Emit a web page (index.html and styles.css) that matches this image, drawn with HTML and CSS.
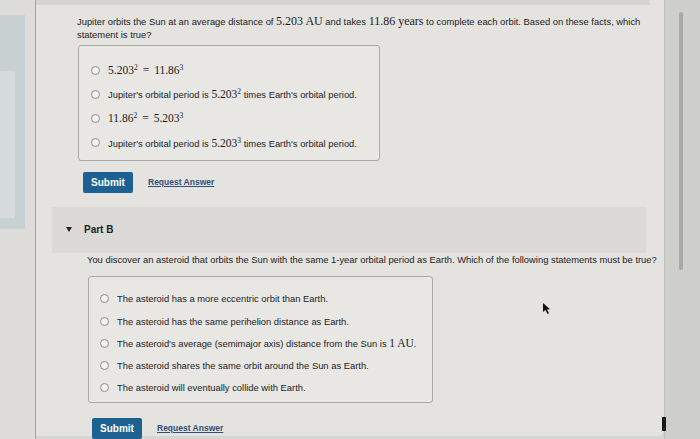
FILE: index.html
```html
<!DOCTYPE html>
<html>
<head>
<meta charset="utf-8">
<link rel="stylesheet" href="styles.css">
</head>
<body>
<div class="page">
  <div class="side">
    <div class="side-panel"><div class="side-inner"></div></div>
  </div>
  <div class="main">
    <div class="topstrip"></div>
    <section class="part part-a">
      <p class="question">Jupiter orbits the Sun at an average distance of <span class="m">5.203 AU</span> and takes <span class="m">11.86 years</span> to complete each orbit. Based on these facts, which statement is true?</p>
      <div class="choices choices-a">
        <label class="choice"><span class="radio"></span><span class="m">5.203<sup>2</sup><span class="op">=</span>11.86<sup>3</sup></span></label>
        <label class="choice"><span class="radio"></span><span>Jupiter's orbital period is <span class="m">5.203<sup>2</sup></span> times Earth's orbital period.</span></label>
        <label class="choice"><span class="radio"></span><span class="m">11.86<sup>2</sup><span class="op">=</span>5.203<sup>3</sup></span></label>
        <label class="choice"><span class="radio"></span><span>Jupiter's orbital period is <span class="m">5.203<sup>3</sup></span> times Earth's orbital period.</span></label>
      </div>
      <div class="actions">
        <button class="submit">Submit</button>
        <a class="request">Request Answer</a>
      </div>
    </section>
    <div class="part-header">
      <span class="caret"></span>
      <span class="part-title">Part B</span>
    </div>
    <section class="part part-b">
      <p class="question">You discover an asteroid that orbits the Sun with the same 1-year orbital period as Earth. Which of the following statements must be true?</p>
      <div class="choices choices-b">
        <label class="choice"><span class="radio"></span><span>The asteroid has a more eccentric orbit than Earth.</span></label>
        <label class="choice"><span class="radio"></span><span>The asteroid has the same perihelion distance as Earth.</span></label>
        <label class="choice"><span class="radio"></span><span>The asteroid's average (semimajor axis) distance from the Sun is <span class="m">1 AU</span>.</span></label>
        <label class="choice"><span class="radio"></span><span>The asteroid shares the same orbit around the Sun as Earth.</span></label>
        <label class="choice"><span class="radio"></span><span>The asteroid will eventually collide with Earth.</span></label>
      </div>
      <div class="actions">
        <button class="submit">Submit</button>
        <a class="request">Request Answer</a>
      </div>
    </section>
    <span class="cursor">
      <svg width="10" height="12" viewBox="0 0 10 12"><path d="M1 0 L1 9 L3.5 7 L5.5 11 L7 10.3 L5 6.5 L8 6.2 Z" fill="#111"/></svg>
    </span>
    <span class="mark"></span>
  </div>
  <div class="scroll"><div class="thumb"></div></div>
</div>
</body>
</html>
```

FILE: styles.css
```css
* { box-sizing: border-box; }
html, body {
  margin: 0;
  padding: 0;
}
body {
  width: 700px;
  height: 439px;
  overflow: hidden;
  background: #d6d6d3;
  font-family: "Liberation Sans", Arial, sans-serif;
  color: #222;
}
.page {
  display: flex;
  height: 439px;
}
.side {
  width: 36px;
  flex: none;
  background: #dddcd9;
  border-right: 1px solid #a2a2a0;
  padding-top: 15px;
}
.side-panel {
  width: 25px;
  height: 214px;
  background: #c8d2d2;
  padding: 56px 10px 11px 0;
}
.side-inner {
  height: 100%;
  background: #d6dcdb;
}
.main {
  position: relative;
  flex: 1;
  background: #e4e3e0;
  border-bottom-right-radius: 6px;
  margin-bottom: 3px;
}
.topstrip {
  height: 5px;
  background: #d6d5d2;
  margin-right: 14px;
}
.part { margin: 0; }
.part-a { padding-left: 41px; }
.part-b { padding-left: 51px; }
.question {
  margin: 0;
  font-size: 9.4px;
  line-height: 13px;
  width: 575px;
}
.part-a .question { padding-top: 10px; }
.m {
  font-family: "Liberation Serif", "Times New Roman", serif;
  font-size: 11.5px;
  color: #1c1c1c;
}
.question .m { font-size: 12px; }
.op { margin: 0 5px; }
sup {
  font-size: 7.5px;
  vertical-align: 4px;
  line-height: 0;
}
.choices {
  border: 1px solid #a9a9a7;
  border-radius: 3px;
  background: #e8e7e4;
  display: flex;
  flex-direction: column;
}
.choices-a {
  width: 302px;
  margin: 4px 0 0 1px;
  padding: 12px 0 5px 12px;
}
.choices-b {
  width: 345px;
  margin: 10px 0 0 1px;
  padding: 11px 0 3px 11px;
}
.choice {
  display: flex;
  align-items: center;
  gap: 8px;
  font-size: 9.4px;
}
.choices-a .choice { height: 24.2px; }
.choices-b .choice { height: 22.2px; }
.radio {
  width: 9px;
  height: 9px;
  flex: none;
  border: 1px solid #8c8c8a;
  border-radius: 50%;
  background: #f2f2f0;
}
.actions {
  display: flex;
  align-items: center;
  gap: 15px;
  margin-top: 11px;
  padding-left: 6px;
}
.part-b .actions { margin-top: 15px; padding-left: 5px; }
.submit {
  width: 50px;
  height: 21px;
  border: 0;
  border-radius: 2px;
  background: #1c6191;
  color: #fff;
  font-family: "Liberation Sans", Arial, sans-serif;
  font-weight: bold;
  font-size: 10px;
  padding: 0;
}
.request {
  color: #2f4f77;
  font-size: 8.5px;
  font-weight: bold;
  text-decoration: underline;
}
.part-header {
  display: flex;
  align-items: center;
  height: 46px;
  margin: 14px 18px 0 16px;
  background: #dbdad7;
  padding-left: 14px;
  gap: 12px;
}
.caret {
  width: 0;
  height: 0;
  border-left: 3.5px solid transparent;
  border-right: 3.5px solid transparent;
  border-top: 5px solid #222;
}
.part-title {
  font-size: 10px;
  font-weight: bold;
}
.cursor {
  position: absolute;
  left: 506px;
  top: 301px;
}
.mark {
  position: absolute;
  right: -2px;
  top: 417px;
  width: 4px;
  height: 14px;
  background: #1a1a1a;
}
.scroll {
  width: 36px;
  flex: none;
  background: #cfcfcc;
  border-left: 1px solid #bdbdbb;
  padding: 12px 0 0 14px;
}
.thumb {
  width: 4px;
  height: 258px;
  border-radius: 2px;
  background: #a9a9a7;
}
```
